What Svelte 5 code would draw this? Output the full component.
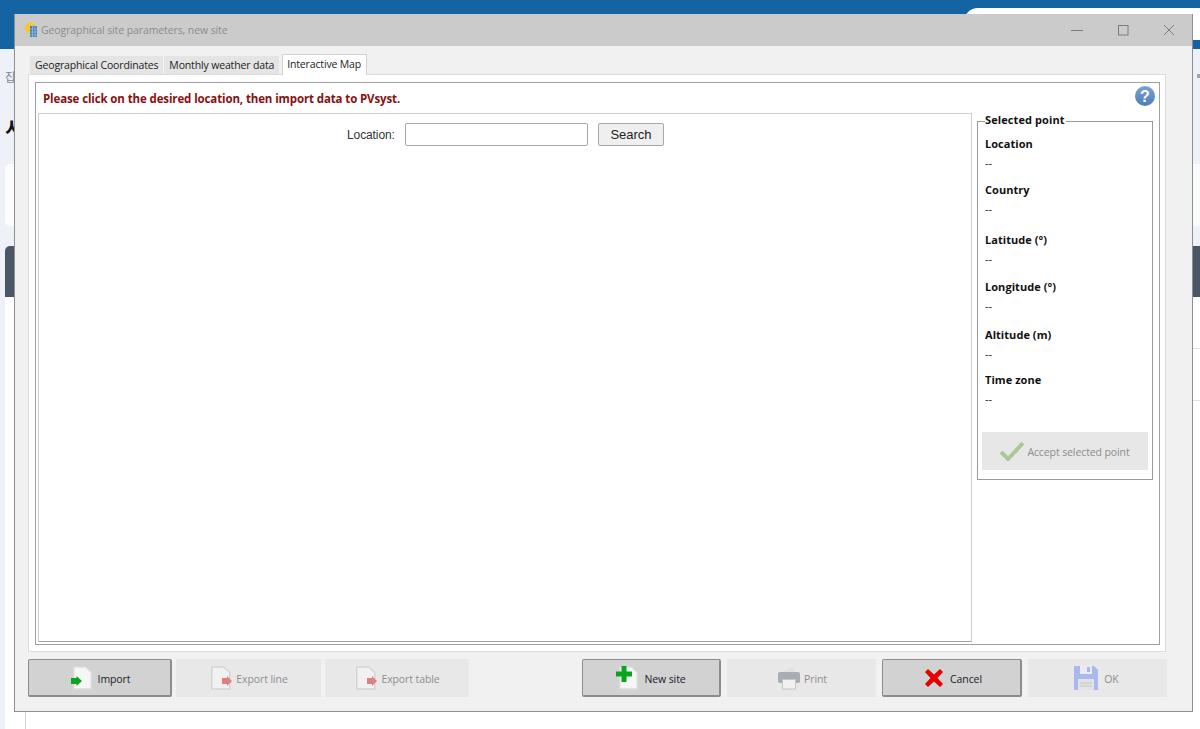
<script>
  const fields = [
    { label: "Location", top: 14 },
    { label: "Country", top: 12 },
    { label: "Latitude (°)", top: 16 },
    { label: "Longitude (°)", top: 13 },
    { label: "Altitude (m)", top: 14 },
    { label: "Time zone", top: 11 }
  ];
</script>

<div class="desktop">
  <div class="topbar">
    <div class="browser-tab"></div>
  </div>
  <div class="behind">
    <div class="behind-left">
      <span class="crumb">잡</span>
      <span class="heading">시</span>
      <div class="card"></div>
      <div class="dark-head"></div>
      <div class="side-line"></div>
    </div>
    <div class="behind-right">
      <div class="upper"></div>
      <span class="caret"></span>
      <div class="card-r"></div>
      <div class="dark-head-r"></div>
      <div class="rule"></div>
      <div class="rule"></div>
    </div>
  </div>

  <div class="window">
    <div class="titlebar">
      <svg class="app-icon" width="12" height="16" viewBox="0 0 12 16">
        <circle cx="5.500" cy="6" r="5.500" fill="#f7c52e" />
        <rect x="5" y="4" width="7" height="11" fill="#4a7fb8" />
        <path d="M5 7h7M5 10h7M5 13h7M7.500 4v11M10 4v11" stroke="#9cc0e4" stroke-width="0.7" />
      </svg>
      <span class="title">Geographical site parameters, new site</span>
      <div class="controls">
        <svg width="12" height="12" viewBox="0 0 12 12"><path d="M0 6.500h12" stroke="#7d7d7d" /></svg>
        <svg width="12" height="12" viewBox="0 0 12 12"><rect x="1.500" y="1.500" width="9.500" height="9.500" fill="none" stroke="#7d7d7d" /></svg>
        <svg width="12" height="12" viewBox="0 0 12 12"><path d="M1 1l10 10M11 1L1 11" stroke="#7d7d7d" /></svg>
      </div>
    </div>

    <div class="tabs">
      <div class="tab">Geographical Coordinates</div>
      <div class="tab">Monthly weather data</div>
      <div class="tab active">Interactive Map</div>
    </div>

    <div class="tab-page">
      <div class="inner">
        <div class="notice">
          <span>Please click on the desired location, then import data to PVsyst.</span>
          <svg class="help" width="20" height="20" viewBox="0 0 20 20">
            <defs>
              <linearGradient id="helpfill" x1="0" y1="0" x2="0" y2="1">
                <stop offset="0" stop-color="#7ba3d4" />
                <stop offset="1" stop-color="#4a7db8" />
              </linearGradient>
            </defs>
            <circle cx="10" cy="10" r="10" fill="url(#helpfill)" />
            <text x="10" y="15.500" text-anchor="middle" font-size="16" font-weight="700" font-family="Liberation Sans, sans-serif" fill="#fff">?</text>
          </svg>
        </div>
        <div class="content">
          <div class="map">
            <div class="search">
              <label for="loc">Location:</label>
              <input id="loc" type="text" />
              <button type="button">Search</button>
            </div>
          </div>
          <div class="side">
            <fieldset>
              <legend>Selected point</legend>
              {#each fields as f}
                <div class="field" style="margin-top: {f.top}px">
                  <b>{f.label}</b>
                  <span>--</span>
                </div>
              {/each}
              <div class="accept">
                <svg width="24" height="20" viewBox="0 0 24 20"><path d="M1 11l7 7L23 2" fill="none" stroke="#a9c99a" stroke-width="4" /></svg>
                <span>Accept selected point</span>
              </div>
            </fieldset>
          </div>
        </div>
      </div>
    </div>

    <div class="footer">
      <div class="group">
        <div class="btn on w144 nudge">
          <svg width="24" height="24" viewBox="0 0 24 24">
            <path d="M2.750 1h12l5.500 5.500v16.500H2.750z" fill="#f6f6f6" stroke="#dcdcdc" stroke-width="1.500" />
            <path d="M0 12h5.500V10l5.500 5-5.500 5v-2H0z" fill="#0aa51e" />
          </svg>
          <span>Import</span>
        </div>
        <div class="btn off w145 nudge">
          <svg width="22" height="24" viewBox="0 0 22 24">
            <path d="M.75 1h12l6 5.500v16.500H.75z" fill="#f1f1f1" stroke="#d4d4d4" stroke-width="1.500" />
            <path d="M11 12h5V10l5 5-5 5v-2h-5z" fill="#e07f7f" />
          </svg>
          <span>Export line</span>
        </div>
        <div class="btn off w144 nudge">
          <svg width="22" height="24" viewBox="0 0 22 24">
            <path d="M.75 1h12l6 5.500v16.500H.75z" fill="#f1f1f1" stroke="#d4d4d4" stroke-width="1.500" />
            <path d="M11 12h5V10l5 5-5 5v-2h-5z" fill="#e07f7f" />
          </svg>
          <span>Export table</span>
        </div>
      </div>
      <div class="group right">
        <div class="btn on w139">
          <svg width="25" height="24" viewBox="0 0 25 24">
            <path d="M3.750 1h12l5.500 5.500v16.500H3.750z" fill="#f6f6f6" stroke="#dcdcdc" stroke-width="1.500" />
            <path d="M5.500 0h5v5.500H16v5h-5.500V16h-5v-5.500H0v-5h5.500z" fill="#0aa51e" />
          </svg>
          <span>New site</span>
        </div>
        <div class="btn off w149 nudge">
          <svg width="23" height="24" viewBox="0 0 23 24">
            <path d="M5 6l10-5 2 5z" fill="#e0e0e0" />
            <rect x="0" y="6" width="22" height="11" rx="2" fill="#a8acb4" />
            <rect x="4.500" y="13.500" width="13" height="9.500" fill="#f1f1f1" stroke="#c6c6c6" />
          </svg>
          <span>Print</span>
        </div>
        <div class="btn on w140 nudge-more">
          <svg width="22" height="18" viewBox="0 0 22 18">
            <path d="M3 0L9 5.500 15 0 18 3 12.500 9 18 15 15 18 9 12.500 3 18 0 15 5.500 9 0 3z" fill="#e60000" />
          </svg>
          <span>Cancel</span>
        </div>
        <div class="btn off w139 nudge-back">
          <svg width="27" height="24" viewBox="0 0 27 24">
            <path d="M0 0h20l4 4v20H0z" fill="#a9b8ee" />
            <rect x="6" y="0" width="12" height="8" fill="#e9ecf7" />
            <rect x="13" y="1" width="3" height="5" fill="#a9b8ee" />
            <rect x="4" y="13" width="16" height="11" fill="#e3e3e3" />
            <path d="M6 17h12M6 20h12" stroke="#c4c4c4" />
          </svg>
          <span>OK</span>
        </div>
      </div>
    </div>
  </div>
</div>

<style>
  :global(body) {
    margin: 0;
    overflow: hidden;
  }

  .desktop {
    position: relative;
    width: 1200px;
    height: 729px;
    background: #fff;
    font-family: "Open Sans", "Noto Sans", sans-serif;
    overflow: hidden;
  }

  .topbar {
    height: 49px;
    background: #1464a3;
    position: relative;
  }

  .browser-tab {
    position: absolute;
    left: 964px;
    top: 8px;
    right: 0;
    height: 32px;
    background: #fff;
    border-radius: 14px 0 0 0;
  }

  .behind {
    display: flex;
    justify-content: space-between;
    height: 680px;
  }

  .behind-left {
    width: 25px;
    background: #eef2f8;
    border-right: 1px solid #ccd2dc;
    position: relative;
  }

  .crumb {
    position: absolute;
    left: 5px;
    top: 19px;
    font: 12px "Noto Sans CJK KR", sans-serif;
    color: #7c8aa0;
  }

  .heading {
    position: absolute;
    left: 5px;
    top: 64px;
    font: 700 20px "Noto Sans CJK KR", sans-serif;
    color: #111;
  }

  .card {
    position: absolute;
    left: 5px;
    top: 115px;
    width: 20px;
    height: 62px;
    background: #fafcff;
    border-radius: 5px 0 0 5px;
  }

  .dark-head {
    position: absolute;
    left: 5px;
    top: 197px;
    width: 21px;
    height: 51px;
    background: #4a5568;
    border-radius: 5px 0 0 0;
  }

  .side-line {
    position: absolute;
    left: 5px;
    top: 248px;
    width: 20px;
    bottom: 0;
    background: #fff;
  }

  .behind-right {
    width: 7px;
    background: #fff;
    position: relative;
  }

  .upper {
    height: 197px;
    background: #eef2f8;
  }

  .caret {
    position: absolute;
    left: 4px;
    top: 25px;
    width: 3px;
    height: 4px;
    background: #9aa5b5;
  }

  .card-r {
    position: absolute;
    left: 0;
    right: 0;
    top: 115px;
    height: 62px;
    background: #f8fafc;
  }

  .dark-head-r {
    position: absolute;
    left: 0;
    right: 0;
    top: 197px;
    height: 51px;
    background: #4a5568;
  }

  .rule {
    position: absolute;
    left: 0;
    right: 0;
    top: 299px;
    height: 1px;
    background: #dde1e8;
  }

  .rule + .rule {
    top: 351px;
  }

  .window {
    position: absolute;
    left: 14px;
    top: 14px;
    width: 1179px;
    height: 698px;
    box-sizing: border-box;
    background: #f1f1f1;
    border: 1px solid #8f8f8f;
    border-top: 0;
    display: flex;
    flex-direction: column;
  }

  .titlebar {
    height: 32px;
    background: #cbcbcb;
    display: flex;
    align-items: center;
    padding-left: 10px;
    flex: none;
  }

  .app-icon {
    margin-right: 4px;
  }

  .title {
    font-size: 10.5px;
    color: #8b8b8b;
    letter-spacing: -0.1px;
  }

  .controls {
    margin-left: auto;
    display: flex;
    gap: 34px;
    padding-right: 17px;
  }

  .tabs {
    display: flex;
    padding: 8px 0 0 15px;
    height: 28px;
    box-sizing: border-box;
    align-items: flex-end;
    flex: none;
  }

  .tab {
    height: 18px;
    padding: 0 5px;
    margin-right: 1px;
    background: #e4e4e4;
    font-size: 10.5px;
    line-height: 18px;
    color: #222;
    letter-spacing: -0.15px;
  }

  .tab.active {
    background: #fff;
    border: 1px solid #d2d2d2;
    border-bottom: 0;
    box-sizing: border-box;
    position: relative;
    margin: 0 0 -1px 2px;
    padding: 0 5px 0 4px;
    line-height: 19px;
    height: 21px;
    z-index: 1;
  }

  .tab-page {
    margin: 0 26px 0 13px;
    height: 578px;
    box-sizing: border-box;
    background: #fff;
    border: 1px solid #dcdcdc;
    padding: 7px 5px 0 6px;
    flex: none;
  }

  .inner {
    height: 563px;
    box-sizing: border-box;
    border: 1px solid #a0a0a0;
    display: flex;
    flex-direction: column;
  }

  .notice {
    height: 30px;
    display: flex;
    align-items: center;
    justify-content: space-between;
    padding: 0 4px 0 7px;
    font-size: 11.5px;
    font-weight: 700;
    color: #8a1010;
    flex: none;
  }

  .notice span {
    letter-spacing: -0.12px;
  }

  .help {
    margin-top: -4px;
  }

  .content {
    display: flex;
    flex: 1;
    padding-left: 2px;
  }

  .map {
    width: 934px;
    height: 529px;
    box-sizing: border-box;
    border: 1px solid #cfcfcf;
    border-bottom-color: #a0a0a0;
    padding-top: 9px;
  }

  .search {
    display: flex;
    align-items: center;
    padding-left: 308px;
    height: 23px;
    font-family: "Liberation Sans", sans-serif;
  }

  .search label {
    font-size: 12px;
    color: #333;
    width: 58px;
    letter-spacing: -0.1px;
  }

  .search input {
    width: 183px;
    height: 23px;
    box-sizing: border-box;
    border: 1px solid #a8a8a8;
    border-radius: 2px;
    background: #fff;
    padding: 0;
  }

  .search button {
    width: 66px;
    height: 23px;
    margin-left: 10px;
    box-sizing: border-box;
    border: 1px solid #a8a8a8;
    border-radius: 2px;
    background: #efefef;
    color: #222;
    font-size: 13px;
    font-family: "Liberation Sans", sans-serif;
    padding: 0;
  }

  .side {
    margin-left: 5px;
    width: 176px;
  }

  fieldset {
    margin: 8px 0 0;
    padding: 0 4px 0 7px;
    width: 176px;
    height: 359px;
    box-sizing: border-box;
    border: 1px solid #9a9a9a;
    position: relative;
  }

  legend {
    position: absolute;
    top: -9px;
    left: 7px;
    background: #fff;
    font-size: 11px;
    font-weight: 700;
    color: #111;
    line-height: 14px;
    padding: 0 1px 0 0;
    letter-spacing: 0.1px;
  }

  .field {
    display: flex;
    flex-direction: column;
    gap: 4px;
    font-size: 11px;
    line-height: 15px;
    color: #222;
  }

  .field b {
    color: #111;
    letter-spacing: 0.05px;
  }

  .accept {
    margin-top: 26px;
    margin-left: -3px;
    height: 38px;
    width: 166px;
    background: #e7e7e7;
    display: flex;
    align-items: center;
    justify-content: center;
    gap: 3px;
    font-size: 10.5px;
    color: #8d8d8d;
    letter-spacing: -0.1px;
  }

  .accept span {
    margin-top: 2px;
  }

  .footer {
    display: flex;
    justify-content: space-between;
    padding: 7px 25px 0 13px;
  }

  .group {
    display: flex;
    gap: 4px;
  }

  .group.right {
    gap: 6px;
  }

  .btn {
    height: 38px;
    box-sizing: border-box;
    display: flex;
    align-items: center;
    justify-content: center;
    gap: 3px;
    font-size: 10.5px;
    letter-spacing: -0.1px;
  }

  .btn span {
    margin-top: 2px;
  }

  .nudge { padding-left: 2px; }
  .nudge-more { padding-left: 4px; }
  .nudge-back { padding-right: 2px; }

  .w139 { width: 139px; }
  .w140 { width: 140px; }
  .w144 { width: 144px; }
  .w145 { width: 145px; }
  .w149 { width: 149px; }

  .btn.on {
    background: #d2d2d2;
    border: 1px solid #8c8c8c;
    border-right-width: 2px;
    border-bottom-width: 2px;
    border-radius: 2px;
    color: #1a1a2a;
  }

  .btn.off {
    background: #e8e8e8;
    color: #8e8e8e;
  }
</style>
